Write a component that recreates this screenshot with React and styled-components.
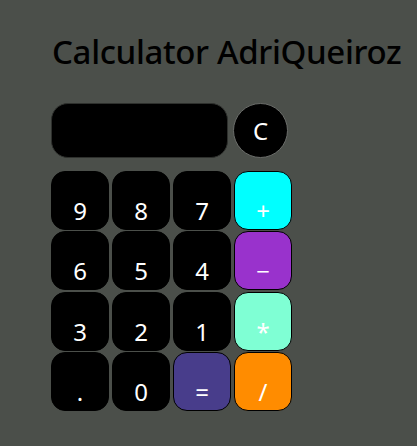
import React, { useState } from 'react';
import styled, { createGlobalStyle } from 'styled-components';

const GlobalStyle = createGlobalStyle`
  html, body {
    margin: 0;
    padding: 0;
    background-color: #4b4f4a;
  }

  body {
    font-family: "Noto Sans", "Open Sans", sans-serif;
  }
`;

const Page = styled.div`
  width: 417px;
  height: 446px;
  padding: 29px 0 0 51px;
  box-sizing: border-box;
`;

const Title = styled.h1`
  margin: 0 0 0 1px;
  font-size: 33px;
  font-weight: 500;
  line-height: 46px;
  color: #000;
  letter-spacing: -0.35px;
`;

const DisplayRow = styled.div`
  display: flex;
  gap: 5px;
  margin-top: 28px;
`;

const Display = styled.div`
  width: 177px;
  height: 55px;
  box-sizing: border-box;
  background-color: #000;
  border: 1px solid #2e302d;
  border-radius: 17px;
  color: #fff;
  font-size: 24px;
  display: flex;
  align-items: center;
  justify-content: flex-end;
  padding: 0 14px;
`;

const ClearButton = styled.button`
  width: 55px;
  height: 55px;
  border-radius: 50%;
  background-color: #000;
  border: 1px solid #6a6c69;
  color: #fff;
  font-family: inherit;
  font-size: 24px;
  padding: 0;
  cursor: pointer;
`;

const Keypad = styled.div`
  display: grid;
  grid-template-columns: repeat(4, 58px);
  grid-auto-rows: 59px;
  column-gap: 3px;
  row-gap: 1.33px;
  margin-top: 13px;
`;

const Key = styled.button`
  box-sizing: border-box;
  background-color: ${p => p.$color || '#000'};
  border: 1px solid #000;
  border-radius: 14px;
  color: #fff;
  font-family: inherit;
  font-size: 24px;
  line-height: 1;
  padding: 21px 0 0;
  cursor: pointer;
`;

const keys = [
  { label: '9' }, { label: '8' }, { label: '7' }, { label: '+', color: '#00ffff' },
  { label: '6' }, { label: '5' }, { label: '4' }, { label: '−', op: '-', color: '#9932cc' },
  { label: '3' }, { label: '2' }, { label: '1' }, { label: '*', color: '#7fffd4' },
  { label: '.' }, { label: '0' }, { label: '=', color: '#483d8b' }, { label: '/', color: '#ff8c00' },
];

export default function App() {
  const [value, setValue] = useState('');

  const press = (k) => {
    if (k === '=') {
      try {
        // eslint-disable-next-line no-new-func
        setValue(String(Function(`return (${value})`)()));
      } catch (e) {
        setValue('');
      }
      return;
    }
    setValue(v => v + k);
  };

  return (
    <>
      <GlobalStyle />
      <Page>
        <Title>Calculator AdriQueiroz</Title>
        <DisplayRow>
          <Display>{value}</Display>
          <ClearButton onClick={() => setValue('')}>C</ClearButton>
        </DisplayRow>
        <Keypad>
          {keys.map(k => (
            <Key key={k.label} $color={k.color} onClick={() => press(k.op || k.label)}>
              {k.label}
            </Key>
          ))}
        </Keypad>
      </Page>
    </>
  );
}
